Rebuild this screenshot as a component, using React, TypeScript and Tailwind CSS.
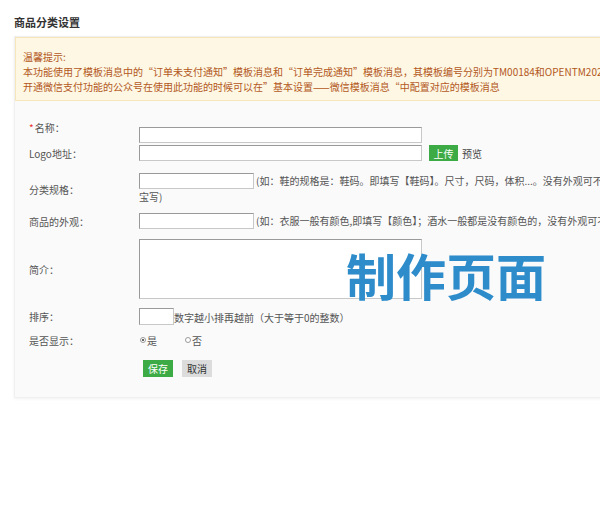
import React from "react";

const font = { fontFamily: '"Noto Sans CJK SC", "Noto Sans", sans-serif' };

function Field({
  label,
  required,
  className,
  labelClass,
  children,
}: {
  label: string;
  required?: boolean;
  className?: string;
  labelClass?: string;
  children: React.ReactNode;
}) {
  return (
    <div className={["flex", className ?? ""].join(" ")}>
      <div
        className={[
          "w-[124px] shrink-0 pl-[14px] text-[10px] text-[#555] flex items-center",
          labelClass ?? "",
        ].join(" ")}
      >
        {required && <span className="text-[#e33] mr-[1px]">*</span>}
        {label}
      </div>
      <div className="flex-1 min-w-0">{children}</div>
    </div>
  );
}

function TextBox({ w, h = 16 }: { w: number; h?: number }) {
  return (
    <span
      className="inline-block align-bottom bg-white border border-[#c8c8c8] border-t-[#9a9a9a] border-l-[#9a9a9a]"
      style={{ width: w, height: h }}
    />
  );
}

function Radio({ checked, label }: { checked?: boolean; label: string }) {
  return (
    <span className="inline-flex items-center gap-[1px] text-[10px] text-[#555]">
      <span className="w-[6px] h-[6px] rounded-full border border-[#999] bg-white flex items-center justify-center">
        {checked && <span className="w-[2px] h-[2px] rounded-full bg-[#333]" />}
      </span>
      {label}
    </span>
  );
}

export default function App() {
  return (
    <div className="relative w-[600px] h-[507px] overflow-hidden bg-white" style={font}>
      <div className="px-[14px] pt-[14px] text-[11px] leading-[16px] font-bold text-[#333]">
        商品分类设置
      </div>

      <div className="ml-[14px] mt-[6px] w-[720px] bg-[#fafafa] border border-[#f0f0f0] shadow-[0_1px_3px_rgba(0,0,0,0.06)] pb-[20px]">
        <div className="bg-[#fdf7e4] border border-[#f6e6bb] pt-[11px] pb-[6px] px-[7px] text-[10px] leading-[15px] text-[#b3581c] whitespace-nowrap">
          <div>温馨提示:</div>
          <div>
            本功能使用了模板消息中的“订单未支付通知”模板消息和“订单完成通知”模板消息，其模板编号分别为TM00184和OPENTM202174135
          </div>
          <div>开通微信支付功能的公众号在使用此功能的时候可以在”基本设置——微信模板消息“中配置对应的模板消息</div>
        </div>

        <Field label="名称：" required className="mt-[18px] h-[16px]">
          <TextBox w={283} />
        </Field>

        <Field label="Logo地址：" className="mt-[10px] h-[16px]">
          <div className="flex items-center">
            <TextBox w={283} />
            <span className="ml-[7px] w-[29px] h-[16px] bg-[#3dab45] text-white text-[10px] flex items-center justify-center">
              上传
            </span>
            <span className="ml-[4px] text-[10px] text-[#444]">预览</span>
          </div>
        </Field>

        <Field label="分类规格：" className="mt-[12px] h-[32px]">
          <div className="text-[10px] leading-[16px] text-[#555] whitespace-nowrap">
            <TextBox w={115} />
            <span className="ml-[2px]">
              (如：鞋的规格是：鞋码。即填写【鞋码】。尺寸，尺码，体积...。没有外观可不填
            </span>
            <br />
            宝写)
          </div>
        </Field>

        <Field label="商品的外观：" className="mt-[8px] h-[16px]">
          <div className="text-[10px] leading-[16px] text-[#555] whitespace-nowrap">
            <TextBox w={115} />
            <span className="ml-[2px]">
              (如：衣服一般有颜色,即填写【颜色】；酒水一般都是没有颜色的，没有外观可不填写)
            </span>
          </div>
        </Field>

        <Field label="简介：" className="mt-[10px] h-[60px]">
          <TextBox w={283} h={60} />
        </Field>

        <Field label="排序：" className="mt-[9px] h-[17px]">
          <div className="flex items-end text-[10px] text-[#555] whitespace-nowrap">
            <TextBox w={35} h={17} />
            <span className="leading-[14px]">数字越小排再越前（大于等于0的整数）</span>
          </div>
        </Field>

        <Field label="是否显示：" className="mt-[7px] h-[16px]">
          <div className="flex items-center h-full gap-[28px] pl-[1px]">
            <Radio checked label="是" />
            <Radio label="否" />
          </div>
        </Field>

        <div className="mt-[12px] pl-[128px] flex gap-[9px]">
          <span className="w-[30px] h-[17px] bg-[#3dab45] text-white text-[10px] flex items-center justify-center">
            保存
          </span>
          <span className="w-[30px] h-[17px] bg-[#dcdcdc] text-[#333] text-[10px] flex items-center justify-center">
            取消
          </span>
        </div>
      </div>

      <div className="absolute left-[346px] top-[246px] text-[50px] leading-[56px] font-bold text-[#2e8ccb] tracking-[0px]">
        制作页面
      </div>
    </div>
  );
}
